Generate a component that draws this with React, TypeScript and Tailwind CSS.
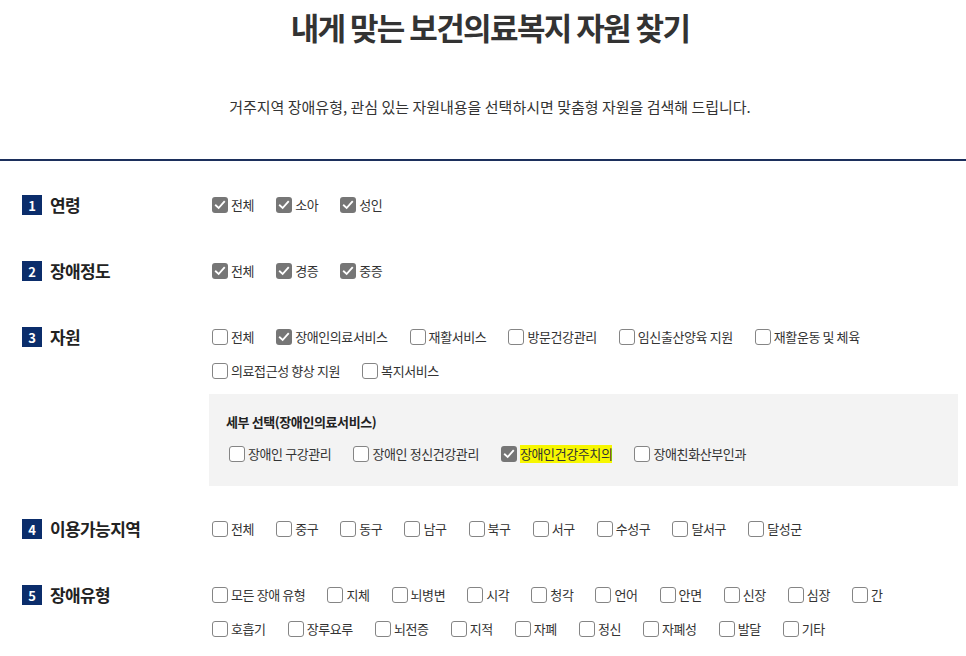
// 보건의료복지 자원 찾기 — filter form with numbered sections and checkbox rows

const FONT = { fontFamily: '"Noto Sans CJK KR", "Noto Sans", sans-serif' };

type Item = { label: string; checked?: boolean; highlight?: boolean };

function CheckIcon() {
  return (
    <svg viewBox="0 0 16 16" className="w-3 h-3" fill="none">
      <path d="M2.5 8.5 L6.2 12 L13.5 3.8" stroke="white" strokeWidth="2.5" strokeLinecap="square" />
    </svg>
  );
}

function Check({ label, checked, highlight }: Item) {
  return (
    <label className="flex items-center mr-[19px] h-[34px] shrink-0">
      {checked ? (
        <span className="ml-[3px] w-4 h-4 rounded-[3px] bg-[#767676] flex items-center justify-center">
          <CheckIcon />
        </span>
      ) : (
        <span className="ml-[3px] w-4 h-4 rounded-[3px] border border-[#858585] bg-white" />
      )}
      <span
        className={
          "ml-[3px] text-[13px] tracking-[-0.4px] text-[#333] leading-[18px] " +
          (highlight ? "bg-[#f7f700] text-[#222]" : "")
        }
      >
        {label}
      </span>
    </label>
  );
}

function Row({ items }: { items: Item[] }) {
  return (
    <div className="flex flex-nowrap">
      {items.map((it) => (
        <Check key={it.label} {...it} />
      ))}
    </div>
  );
}

function Section({
  num,
  title,
  children,
  bottom = "pb-4",
}: {
  num: number;
  title: string;
  children: React.ReactNode;
  bottom?: string;
}) {
  return (
    <div className={"flex pt-4 " + bottom}>
      <div className="w-[209px] shrink-0 pl-[22px] flex items-start h-[34px]">
        <div className="flex items-center h-[34px]">
          <span className="w-5 h-5 bg-[#0b2d6b] text-white text-[13px] font-bold flex items-center justify-center leading-none">
            {num}
          </span>
          <span className="ml-2 text-[17px] font-bold text-[#222] tracking-[-0.6px]">{title}</span>
        </div>
      </div>
      <div className="flex-1 pr-2">{children}</div>
    </div>
  );
}

export default function App() {
  return (
    <div className="w-[966px] h-[656px] bg-white overflow-hidden" style={FONT}>
      {/* heading */}
      <div className="flex flex-col items-center pl-[14px]">
        <h1 className="mt-[5px] text-[31px] font-bold text-[#333] tracking-[-1.6px] leading-[44px]">
          내게 맞는 보건의료복지 자원 찾기
        </h1>
        <p className="mt-[47px] text-[15px] text-[#333] tracking-[0px] leading-[22px]">
          거주지역 장애유형, 관심 있는 자원내용을 선택하시면 맞춤형 자원을 검색해 드립니다.
        </p>
      </div>
      <div className="mt-[41px] h-[2px] bg-[#1c2f5c]" />

      <div className="pt-[11px]">
        <Section num={1} title="연령">
          <Row
            items={[
              { label: "전체", checked: true },
              { label: "소아", checked: true },
              { label: "성인", checked: true },
            ]}
          />
        </Section>

        <Section num={2} title="장애정도">
          <Row
            items={[
              { label: "전체", checked: true },
              { label: "경증", checked: true },
              { label: "중증", checked: true },
            ]}
          />
        </Section>

        <Section num={3} title="자원" bottom="pb-[10px]">
          <Row
            items={[
              { label: "전체" },
              { label: "장애인의료서비스", checked: true },
              { label: "재활서비스" },
              { label: "방문건강관리" },
              { label: "임신출산양육 지원" },
              { label: "재활운동 및 체육" },
            ]}
          />
          <Row items={[{ label: "의료접근성 향상 지원" }, { label: "복지서비스" }]} />
          <div className="mt-[6px] bg-[#f3f3f3] h-[92px] pl-[17px] pt-[19px]">
            <div className="text-[13px] font-bold text-[#222] tracking-[-0.4px] leading-[18px]">
              세부 선택(장애인의료서비스)
            </div>
            <div className="mt-[6px]">
              <Row
                items={[
                  { label: "장애인 구강관리" },
                  { label: "장애인 정신건강관리" },
                  { label: "장애인건강주치의", checked: true, highlight: true },
                  { label: "장애친화산부인과" },
                ]}
              />
            </div>
          </div>
        </Section>

        <Section num={4} title="이용가능지역">
          <Row
            items={["전체", "중구", "동구", "남구", "북구", "서구", "수성구", "달서구", "달성군"].map(
              (l) => ({ label: l })
            )}
          />
        </Section>

        <Section num={5} title="장애유형">
          <Row
            items={["모든 장애 유형", "지체", "뇌병변", "시각", "청각", "언어", "안면", "신장", "심장", "간"].map(
              (l) => ({ label: l })
            )}
          />
          <Row
            items={["호흡기", "장루요루", "뇌전증", "지적", "자폐", "정신", "자폐성", "발달", "기타"].map((l) => ({
              label: l,
            }))}
          />
        </Section>
      </div>
    </div>
  );
}
